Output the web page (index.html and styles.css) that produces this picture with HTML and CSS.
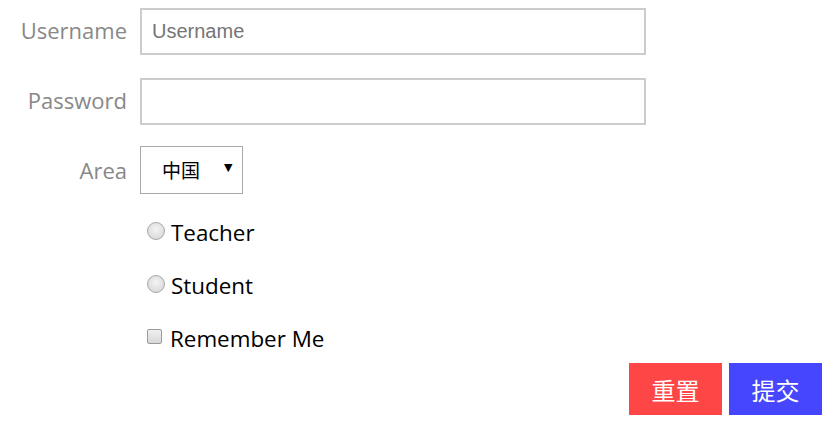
FILE: index.html
```html
<!DOCTYPE html>
<html lang="zh">
<head>
<meta charset="utf-8">
<title>Login</title>
<link rel="stylesheet" href="styles.css">
</head>
<body>
<form class="form">
  <div class="row">
    <label class="lbl">Username</label>
    <input class="field" type="text" placeholder="Username">
  </div>
  <div class="row row-pw">
    <label class="lbl">Password</label>
    <input class="field" type="password">
  </div>
  <div class="row row-area">
    <label class="lbl">Area</label>
    <div class="select"><span class="sel-text">中国</span><span class="sel-arrow">▼</span></div>
  </div>
  <div class="opts">
    <label class="opt"><span class="radio"></span><span>Teacher</span></label>
    <label class="opt"><span class="radio"></span><span>Student</span></label>
    <label class="opt"><span class="check"></span><span>Remember Me</span></label>
  </div>
  <div class="actions">
    <button type="button" class="btn btn-reset">重置</button>
    <button type="button" class="btn btn-submit">提交</button>
  </div>
</form>
</body>
</html>
```
FILE: styles.css
```css
html, body {
  background: #fff;
}
body {
  margin: 8px;
  font-family: "Open Sans", "Noto Sans", "Noto Sans CJK SC", sans-serif;
}
.form {
  display: flex;
  flex-direction: column;
}
.row {
  display: flex;
  align-items: center;
}
.row-pw {
  margin-top: 23px;
}
.row-area {
  margin-top: 21px;
}
.lbl {
  width: 119px;
  margin-right: 13px;
  text-align: right;
  color: #888;
  font-size: 22px;
  margin-top: -3px;
}
.row-area .lbl {
  margin-top: -1px;
}
.field {
  box-sizing: border-box;
  width: 506px;
  height: 47px;
  border: 2px solid #ccc;
  margin: 0;
  padding: 0 10px;
  font-family: "Liberation Sans", Arial, sans-serif;
  font-size: 20px;
  color: #333;
  outline: none;
}
.field::placeholder {
  color: #757575;
}
.select {
  box-sizing: border-box;
  width: 103px;
  height: 48px;
  border: 1px solid #a9a9a9;
  display: flex;
  align-items: center;
  padding-left: 21px;
  padding-bottom: 2px;
}
.sel-text {
  font-family: "Noto Sans CJK SC", sans-serif;
  font-size: 19px;
  color: #000;
  width: 62px;
}
.sel-arrow {
  font-family: "DejaVu Sans", sans-serif;
  font-size: 11px;
  color: #000;
  margin-top: -4px;
}
.opts {
  display: flex;
  flex-direction: column;
  gap: 27px;
  margin-top: 25px;
  padding-left: 139px;
}
.opt {
  display: flex;
  align-items: center;
  height: 26px;
  font-size: 22.4px;
  color: #000;
}
.radio {
  box-sizing: border-box;
  width: 18px;
  height: 18px;
  border-radius: 50%;
  border: 1px solid #a8a8a8;
  background: radial-gradient(circle at 50% 40%, #f4f4f4 0%, #dcdcdc 70%, #cfcfcf 100%);
  margin-right: 6px;
  margin-top: -2px;
}
.check {
  box-sizing: border-box;
  width: 15px;
  height: 15px;
  border-radius: 2px;
  border: 1px solid #9a9a9a;
  background: linear-gradient(#f0f0f0, #d8d8d8);
  margin-right: 8px;
  margin-top: -3px;
}
.actions {
  display: flex;
  justify-content: flex-end;
  gap: 7px;
  margin-top: 12px;
  padding-right: 3px;
}
.btn {
  width: 93px;
  height: 52px;
  border: none;
  margin: 0;
  padding: 0;
  color: #fff;
  font-family: "Noto Sans CJK SC", sans-serif;
  font-size: 24px;
}
.btn-reset {
  background: #ff4646;
}
.btn-submit {
  background: #4646ff;
}
```
